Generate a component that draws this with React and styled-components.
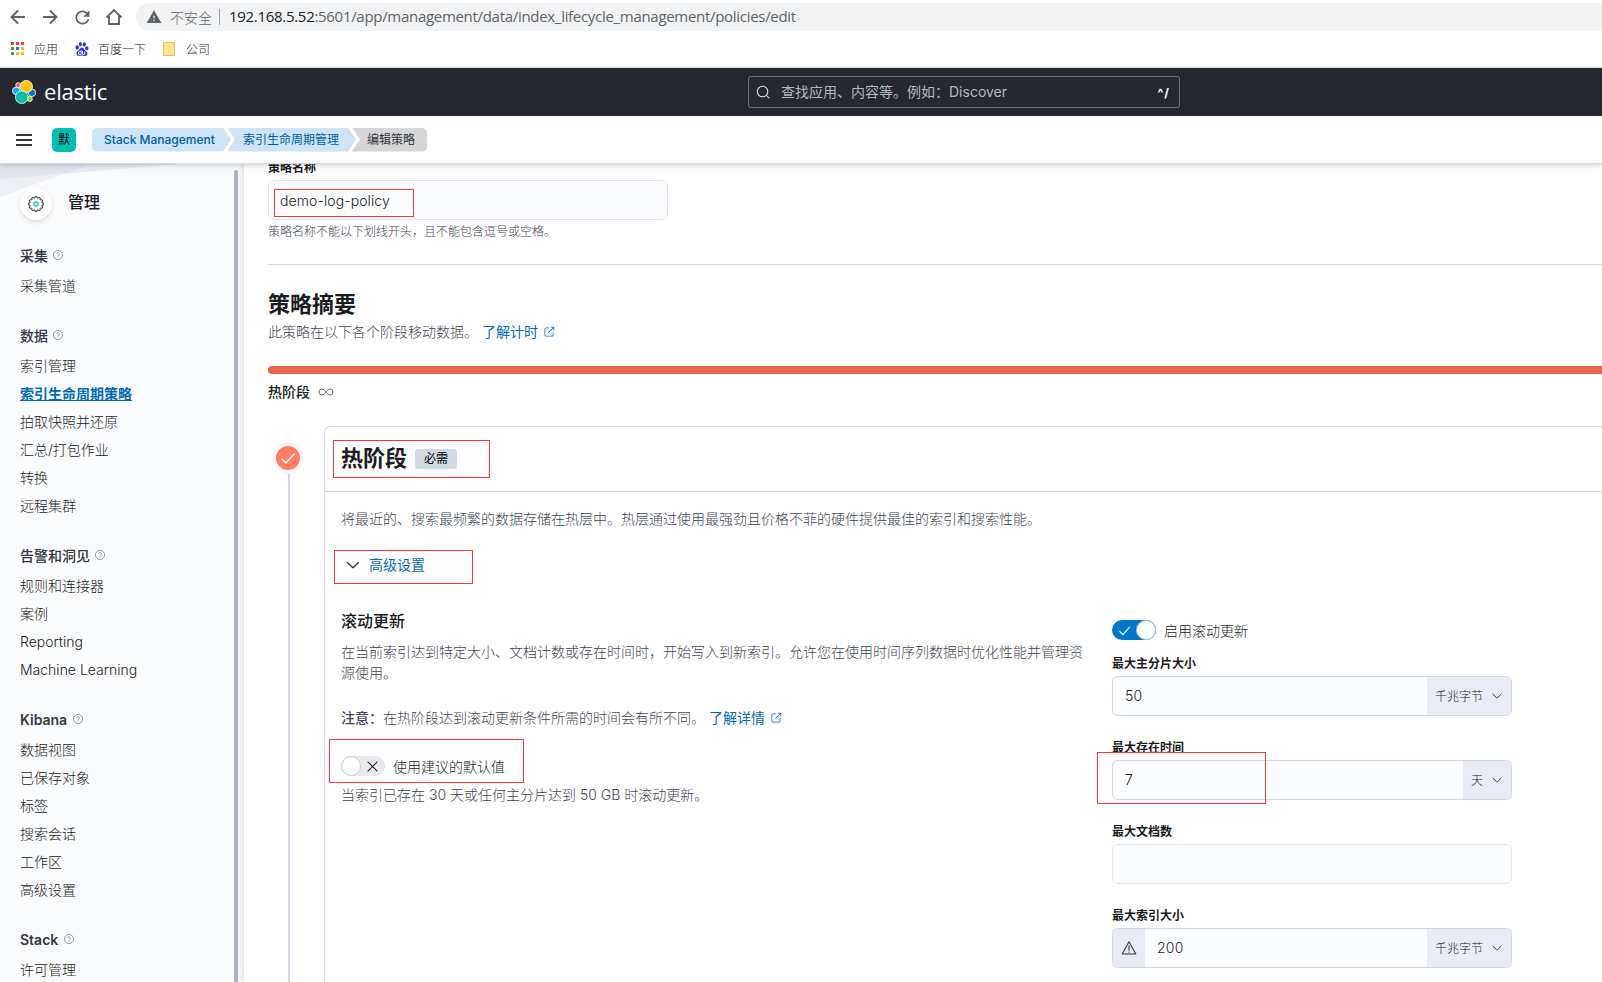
import React from 'react';
import styled, { createGlobalStyle, css } from 'styled-components';
import { MdWarning, MdRefresh } from 'react-icons/md';
import { SiBaidu } from 'react-icons/si';

const GlobalStyle = createGlobalStyle`
  * { box-sizing: border-box; }
  body {
    margin: 0;
    background: #fff;
    color: #343741;
    font-family: Inter, "Noto Sans CJK SC", sans-serif;
    font-size: 14px;
    overflow: hidden;
  }
  svg { display: block; flex: none; }
`

const Page = styled.div`
  position: relative;
  display: flex;
  flex-direction: column;
  height: 100vh;
  overflow: hidden;
  white-space: nowrap;
`

/* browser bars */

const AddressBar = styled.div`
  display: flex;
  align-items: center;
  height: 34px;
  padding-left: 7px;
  color: #5f6368;
`
const NavIcon = styled.div`
  display: flex;
  justify-content: center;
  width: 22px;
  margin-right: 10px;
`
const UrlPill = styled.div`
  display: flex;
  align-items: center;
  flex: 1;
  height: 28px;
  margin-left: 1px;
  padding-left: 10px;
  border-radius: 14px 0 0 14px;
  background: #f1f3f4;
`
const Insecure = styled.span`
  margin-left: 8px;
  padding-right: 7px;
  border-right: 1px solid #9aa0a6;
  line-height: 16px;
  font-family: "Noto Sans CJK SC", sans-serif;
  font-weight: 300;
`
const Url = styled.span`
  margin-left: 9px;
  padding-bottom: 2px;
  font-family: "Open Sans", sans-serif;
  font-size: 15px;
  letter-spacing: -0.3px;
`
const UrlHost = styled.span`
  color: #202124;
`
const Bookmarks = styled.div`
  display: flex;
  align-items: center;
  height: 34px;
  padding-left: 11px;
  padding-bottom: 4px;
  border-bottom: 1px solid #d9dce0;
  font-family: "Noto Sans CJK SC", sans-serif;
  font-size: 12px;
  font-weight: 300;
  color: #202124;
`
const Bookmark = styled.div`
  display: flex;
  align-items: center;
  gap: ${p => p.$gap || 10}px;
  margin-right: 17px;
`
const AppsGrid = styled.div`
  display: grid;
  grid-template-columns: repeat(3, 3px);
  gap: 2px;
`
const AppsDot = styled.i`
  height: 3px;
  background: ${p => p.$color};
`
const FolderMark = styled.div`
  width: 12px;
  height: 14px;
  margin-right: 1px;
  border: 1px solid #e8c64c;
  background: #ffe592;
`

/* kibana headers */

const TopHeader = styled.header`
  display: flex;
  align-items: center;
  flex: none;
  height: 48px;
  padding-left: 12px;
  background: #25282f;
  color: #fff;
`
const Brand = styled.div`
  display: flex;
  align-items: center;
  gap: 8px;
  width: 736px;
`
const Wordmark = styled.span`
  padding-bottom: 2px;
  font-family: "Open Sans", sans-serif;
  font-size: 22px;
  font-weight: 400;
  line-height: 24px;
  letter-spacing: -0.2px;
`
const Search = styled.div`
  display: flex;
  align-items: center;
  width: 432px;
  height: 32px;
  padding: 0 9px 0 7px;
  border: 1px solid #6a6d73;
  border-radius: 3px;
  color: #b3b7c1;
`
const SearchText = styled.span`
  flex: 1;
  margin-left: 11px;
  padding-bottom: 2px;
`
const SearchKey = styled.span`
  padding-top: 1px;
  color: #fff;
  font-size: 12px;
  font-weight: 700;
  letter-spacing: 1px;
`
const SubHeader = styled.div`
  display: flex;
  align-items: center;
  flex: none;
  position: relative;
  z-index: 2;
  height: 48px;
  padding-left: 16px;
  background: #fff;
  border-bottom: 1px solid #d3dae6;
  box-shadow: 0 1px 4px rgba(0, 0, 0, 0.14), 0 4px 9px rgba(0, 0, 0, 0.05);
`
const Burger = styled.div`
  width: 16px;
  height: 12px;
  border-top: 2px solid #343741;
  border-bottom: 2px solid #343741;
  display: flex;
  align-items: center;
  &::before {
    content: '';
    width: 16px;
    height: 2px;
    background: #343741;
  }
`
const Space = styled.div`
  width: 24px;
  height: 24px;
  margin: 0 16px 0 20px;
  border-radius: 5px;
  background: #00bfb3;
  color: #000;
  font-size: 12px;
  line-height: 23px;
  text-align: center;
`
const Crumb = styled.div`
  height: 24px;
  padding: 0 17px 0 16px;
  margin-left: -4px;
  background: #cce4f5;
  color: #0061a6;
  font-size: 12px;
  font-weight: ${p => p.$weight || 400};
  line-height: 24px;
  clip-path: polygon(0 0, calc(100% - 8px) 0, 100% 50%, calc(100% - 8px) 100%, 0 100%, 8px 50%);
  ${p => p.$first && css`
    width: 139px;
    margin-left: 0;
    padding-left: 12px;
    border-radius: 5px 0 0 5px;
    clip-path: polygon(0 0, calc(100% - 8px) 0, 100% 50%, calc(100% - 8px) 100%, 0 100%);
  `}
  ${p => p.$last && css`
    padding: 0 12px 0 15px;
    border-radius: 0 5px 5px 0;
    background: #d6d6d8;
    color: #343741;
    clip-path: polygon(0 0, 100% 0, 100% 100%, 0 100%, 8px 50%);
  `}
`

/* side nav */

const Body = styled.div`
  display: flex;
  flex: 1;
  min-height: 0;
`
const Side = styled.nav`
  position: relative;
  flex: none;
  display: flex;
  width: 244px;
  background: #fafbfd;
`
const SideShapes = styled.svg`
  position: absolute;
  left: 0;
  top: 0;
`
const SideContent = styled.div`
  position: relative;
  width: 234px;
  padding: 24px 0 0 20px;
`
const ScrollThumb = styled.div`
  width: 4px;
  margin-top: 6px;
  border-radius: 2px 2px 0 0;
  background: #afb3be;
`
const SideTitle = styled.div`
  display: flex;
  align-items: center;
  gap: 16px;
  margin-bottom: 25px;
  font-size: 16px;
  font-weight: 500;
  line-height: 28px;
  color: #1a1c21;
`
const SideTitleText = styled.span`
  padding-bottom: 4px;
`
const RoundIcon = styled.div`
  display: flex;
  align-items: center;
  justify-content: center;
  width: 32px;
  height: 32px;
  border-radius: 50%;
  background: #fff;
  box-shadow: 0 2px 5px rgba(0, 0, 0, 0.12);
`
const NavGroup = styled.div`
  margin-bottom: 25px;
`
const NavHeading = styled.div`
  display: flex;
  align-items: center;
  gap: ${p => (p.$latin ? 6 : 5)}px;
  height: 20px;
  margin-bottom: 7px;
  font-weight: ${p => (p.$latin ? 600 : 500)};
  color: #343741;
`
const NavItem = styled.div`
  height: 28px;
  line-height: 28px;
  font-weight: 300;
  color: #1a1c21;
  ${p => p.$active && css`
    color: #006bb8;
    font-weight: 700;
    text-decoration: underline;
  `}
`

/* content */

const Main = styled.main`
  position: relative;
  flex: 1;
  min-width: 0;
  padding-left: 24px;
  background: #fff;
  box-shadow: 0 0 8px rgba(0, 0, 0, 0.16);
`
const Label = styled.div`
  height: 16px;
  margin: ${p => p.$margin || '0'};
  font-size: 12px;
  font-weight: 600;
  line-height: 16px;
  color: #1a1c21;
`
const NameInput = styled.div`
  width: 400px;
  height: 40px;
  padding: 0 11px;
  border: 1px solid #e0e5ee;
  border-radius: 6px;
  background: #fbfcfd;
  font-weight: 300;
  line-height: 39px;
  letter-spacing: 0.1px;
  color: #1a1c21;
`
const HelpText = styled.div`
  margin-top: 4px;
  font-size: 12px;
  font-weight: 300;
  line-height: 16px;
  color: #404550;
`
const Divider = styled.div`
  height: 1px;
  margin-top: 24px;
  background: #d3dae6;
`
const Title = styled.h2`
  margin: 0;
  font-size: 22px;
  font-weight: 700;
  line-height: 32px;
  color: #1a1c21;
`
const SummaryTitle = styled(Title)`
  margin-top: 23px;
`
const Text = styled.div`
  font-weight: 300;
  line-height: 21px;
  color: #404550;
  margin-top: ${p => p.$top || 0}px;
  white-space: ${p => (p.$wrap ? 'normal' : 'nowrap')};
  b { font-weight: 500; }
`
const Link = styled.span`
  display: inline-flex;
  align-items: center;
  gap: 5px;
  margin-left: 4px;
  color: #006bb8;
  font-weight: 400;
`
const PhaseBar = styled.div`
  height: 8px;
  margin-top: 24px;
  border-radius: 4px 0 0 4px;
  background: #e7664c;
`
const PhaseLabel = styled.div`
  display: flex;
  align-items: center;
  gap: 8px;
  margin-top: 7px;
  line-height: 21px;
  font-weight: 500;
  color: #1a1c21;
`
const PhaseRow = styled.div`
  display: flex;
  margin-top: 24px;
  height: 600px;
`
const Timeline = styled.div`
  display: flex;
  flex-direction: column;
  align-items: center;
  width: 40px;
  margin-right: 16px;
  padding: 16px 0 0;
`
const PhaseDot = styled.div`
  display: flex;
  align-items: center;
  justify-content: center;
  width: 32px;
  height: 32px;
  border: 4px solid #f5f7fa;
  border-radius: 50%;
  background: #ff7e62;
`
const TimelineLine = styled.div`
  flex: 1;
  width: 2px;
  margin-left: 2px;
  background: #d3dae6;
`
const PhasePanel = styled.section`
  flex: 1;
  border: 1px solid #d3dae6;
  border-right: 0;
  border-radius: 6px 0 0 0;
`
const PanelHeader = styled.div`
  display: flex;
  align-items: center;
  gap: 8px;
  height: 65px;
  padding: 0 0 2px 16px;
  border-bottom: 1px solid #d3dae6;
`
const Badge = styled.span`
  height: 20px;
  margin-top: 2px;
  padding: 0 9px;
  border-radius: 3px;
  background: #d3dae6;
  color: #000;
  font-size: 12px;
  font-weight: 400;
  line-height: 19px;
`
const PanelBody = styled.div`
  padding: 16px 0 0 16px;
`
const Toggle = styled.div`
  display: flex;
  align-items: center;
  gap: 8px;
  margin: 25px 0 0 4px;
  color: #006bb8;
  line-height: 21px;
`
const Columns = styled.div`
  display: flex;
  margin-top: 34px;
`
const Left = styled.div`
  width: 746px;
  margin-right: 25px;
`
const Right = styled.div`
  width: 400px;
  padding-top: 11px;
`
const SubTitle = styled.h3`
  margin: 0;
  font-size: 16px;
  font-weight: 500;
  line-height: 24px;
  color: #1a1c21;
`
const SwitchRow = styled.div`
  display: flex;
  align-items: center;
  gap: 8px;
  height: 20px;
  margin-top: ${p => p.$top || 0}px;
  font-weight: 300;
  color: #1a1c21;
`
const SwitchTrack = styled.div`
  display: flex;
  align-items: center;
  flex-direction: ${p => (p.$on ? 'row' : 'row-reverse')};
  justify-content: space-between;
  width: 44px;
  height: 20px;
  padding-${p => (p.$on ? 'left' : 'right')}: 6px;
  border-radius: 10px;
  background: ${p => (p.$on ? '#0077cc' : '#e9eaee')};
`
const SwitchThumb = styled.div`
  width: 20px;
  height: 20px;
  border: 1px solid ${p => (p.$on ? '#a5bfd8' : '#c8cacf')};
  border-radius: 50%;
  background: #fff;
`
const Field = styled.div`
  display: flex;
  height: 40px;
  margin-bottom: 24px;
  border: 1px solid ${p => (p.$plain ? '#e2e6f0' : '#cfd7e8')};
  border-radius: 6px;
  background: #fbfcfd;
  overflow: hidden;
`
const FieldValue = styled.div`
  flex: 1;
  padding-left: 12px;
  font-weight: 300;
  line-height: 38px;
  letter-spacing: 0.2px;
  color: #1a1c21;
`
const Prepend = styled.div`
  display: flex;
  align-items: center;
  justify-content: center;
  width: 32px;
  background: #e9ecf4;
`
const Append = styled.div`
  display: flex;
  align-items: center;
  gap: 8px;
  padding: 0 8px 1px;
  background: #e9ecf4;
  font-size: 12px;
  font-weight: 300;
  color: #1a1c21;
`

const Mark = styled.div`
  position: absolute;
  z-index: 5;
  left: ${p => p.$x}px;
  top: ${p => p.$y}px;
  width: ${p => p.$w}px;
  height: ${p => p.$h}px;
  border: 1px solid #f5393b;
`

const Stroke = ({ d, size = 16, box = 16, width = 1, color = 'currentColor', ...rest }) => (
  <svg width={size} height={size} viewBox={`0 0 ${box} ${box}`} fill="none" stroke={color} strokeWidth={width} {...rest}>
    <path d={d} />
  </svg>
)

const Chevron = ({ size = 16 }) => (
  <Stroke size={size} d="M2.5 5.5l4.8 4.7a1 1 0 0 0 1.4 0l4.8-4.7" width={1.3} color="#343741" strokeLinecap="round" />
)

const PopoutIcon = () => (
  <svg width="12" height="12" viewBox="0 0 16 16" fill="currentColor">
    <path d="M13 8.5a.5.5 0 1 1 1 0V12a2 2 0 0 1-2 2H4a2 2 0 0 1-2-2V4a2 2 0 0 1 2-2h3.500a.5.5 0 0 1 0 1H4a1 1 0 0 0-1 1v8a1 1 0 0 0 1 1h8a1 1 0 0 0 1-1V8.500Zm-5.120.339a.5.5 0 1 1-.706-.707L13.305 2H10.500a.5.5 0 1 1 0-1H14a1 1 0 0 1 1 1v3.500a.5.5 0 1 1-1 0V2.720L7.880 8.838Z" />
  </svg>
)

const HelpIcon = () => (
  <svg width="10" height="10" viewBox="0 0 16 16" fill="none" stroke="#747a86" strokeWidth="1.200">
    <circle cx="8" cy="8" r="7.300" />
    <path d="M5.800 6.400a2.200 2.200 0 1 1 3.300 1.900c-.8.400-1.100.8-1.100 1.700M8 11v1.400" />
  </svg>
)

const ElasticLogo = () => (
  <svg width="24" height="24" viewBox="0 0 24 24" stroke="#fff" strokeWidth="0.800">
    <circle cx="6.300" cy="5.200" r="2.600" fill="#f04e98" />
    <circle cx="4.200" cy="10.900" r="3.800" fill="#1ba9f5" />
    <circle cx="19.900" cy="12.800" r="3.800" fill="#0077cc" />
    <circle cx="17.700" cy="18.900" r="2.600" fill="#93c90e" />
    <circle cx="14.300" cy="6.600" r="6.200" fill="#fec514" />
    <circle cx="9.700" cy="17.200" r="6.300" fill="#00bfb3" />
  </svg>
)

const gearPath = () => {
  const teeth = 12
  const points = []
  for (let i = 0; i < teeth; i++) {
    const a = (i / teeth) * Math.PI * 2
    ;[[-0.15, 6.2], [-0.12, 7.5], [0.12, 7.5], [0.15, 6.2]].forEach(([da, r]) => {
      points.push(`${(8 + Math.cos(a + da) * r).toFixed(2)} ${(8 + Math.sin(a + da) * r).toFixed(2)}`)
    })
  }
  return `M${points.join('L')}Z`
}

const GearIcon = () => (
  <svg width="16" height="16" viewBox="0 0 16 16" fill="none" stroke="#343741">
    <path d={gearPath()} />
    <circle cx="8" cy="8" r="2.200" stroke="#00bfb3" strokeWidth="1.200" />
  </svg>
)

const dots = ['#ea4335', '#ea4335', '#ea4335', '#34a853', '#1a73e8', '#fbbc04', '#34a853', '#fbbc04', '#fbbc04']

const groups = [
  { title: '采集', items: ['采集管道'] },
  { title: '数据', items: ['索引管理', '索引生命周期策略', '拍取快照并还原', '汇总/打包作业', '转换', '远程集群'] },
  { title: '告警和洞见', items: ['规则和连接器', '案例', 'Reporting', 'Machine Learning'] },
  { title: 'Kibana', latin: true, items: ['数据视图', '已保存对象', '标签', '搜索会话', '工作区', '高级设置'] },
  { title: 'Stack', latin: true, items: ['许可管理'] },
]

const fields = [
  { label: '最大主分片大小', value: '50', unit: '千兆字节' },
  { label: '最大存在时间', value: '7', unit: '天' },
  { label: '最大文档数', value: '' },
  { label: '最大索引大小', value: '200', unit: '千兆字节', warn: true },
]

const marks = [
  [274, 189, 140, 28],
  [333, 440, 157, 38],
  [334, 550, 139, 34],
  [329, 739, 195, 44],
  [1097, 752, 169, 52],
]

function BrowserBars() {
  return (
    <>
      <AddressBar>
        <NavIcon><Stroke d="M15 8H2M8 1.500L1.500 8L8 14.500" width={1.9} /></NavIcon>
        <NavIcon><Stroke d="M1 8H14M8 1.500L14.500 8L8 14.500" width={1.9} /></NavIcon>
        <NavIcon><MdRefresh size={21} /></NavIcon>
        <NavIcon><Stroke size={18} box={18} d="M1.500 9.500L9 2l7.500 7.500M4 8v8h10V8" width={1.9} /></NavIcon>
        <UrlPill>
          <MdWarning size={16} />
          <Insecure>不安全</Insecure>
          <Url><UrlHost>192.168.5.52</UrlHost>:5601/app/management/data/index_lifecycle_management/policies/edit</Url>
        </UrlPill>
      </AddressBar>
      <Bookmarks>
        <Bookmark>
          <AppsGrid>{dots.map((c, i) => <AppsDot key={i} $color={c} />)}</AppsGrid>
          应用
        </Bookmark>
        <Bookmark $gap={9}><SiBaidu size={14} color="#2932e1" />百度一下</Bookmark>
        <Bookmark><FolderMark />公司</Bookmark>
      </Bookmarks>
    </>
  )
}

function SideNav() {
  return (
    <Side>
      <SideShapes width="234" height="40" viewBox="0 0 234 40">
        <path d="M0 0H178L0 15Z" fill="#e9edf4" />
        <path d="M0 0H90L0 33Z" fill="#d3dae6" fillOpacity="0.350" />
      </SideShapes>
      <SideContent>
        <SideTitle>
          <RoundIcon><GearIcon /></RoundIcon>
          <SideTitleText>管理</SideTitleText>
        </SideTitle>
        {groups.map(g => (
          <NavGroup key={g.title}>
            <NavHeading $latin={g.latin}>{g.title}<HelpIcon /></NavHeading>
            {g.items.map(item => (
              <NavItem key={item} $active={item === '索引生命周期策略'}>{item}</NavItem>
            ))}
          </NavGroup>
        ))}
      </SideContent>
      <ScrollThumb />
    </Side>
  )
}

function HotPhase() {
  return (
    <PhasePanel>
      <PanelHeader>
        <Title>热阶段</Title>
        <Badge>必需</Badge>
      </PanelHeader>
      <PanelBody>
        <Text>将最近的、搜索最频繁的数据存储在热层中。热层通过使用最强劲且价格不菲的硬件提供最佳的索引和搜索性能。</Text>
        <Toggle><Chevron />高级设置</Toggle>
        <Columns>
          <Left>
            <SubTitle>滚动更新</SubTitle>
            <Text $wrap $top={8}>在当前索引达到特定大小、文档计数或存在时间时，开始写入到新索引。允许您在使用时间序列数据时优化性能并管理资源使用。</Text>
            <Text $top={24}>
              <b>注意：</b>在热阶段达到滚动更新条件所需的时间会有所不同。
              <Link>了解详情<PopoutIcon /></Link>
            </Text>
            <SwitchRow $top={28}>
              <SwitchTrack>
                <Stroke size={13} d="M2 2l12 12M14 2L2 14" width={1.3} />
                <SwitchThumb />
              </SwitchTrack>
              使用建议的默认值
            </SwitchRow>
            <Text $top={8}>当索引已存在 30 天或任何主分片达到 50 GB 时滚动更新。</Text>
          </Left>
          <Right>
            <SwitchRow>
              <SwitchTrack $on>
                <Stroke size={13} d="M1.500 8.500l4.500 4.500L14.500 3.500" width={1.4} color="#fff" />
                <SwitchThumb $on />
              </SwitchTrack>
              启用滚动更新
            </SwitchRow>
            {fields.map((f, i) => (
              <React.Fragment key={f.label}>
                <Label $margin={i === 0 ? '16px 0 4px' : '0 0 4px'}>{f.label}</Label>
                <Field $plain={!f.unit}>
                  {f.warn && (
                    <Prepend>
                      <Stroke d="M8 1.800L1.200 14h13.600ZM8 5.500v5M8 11.500v1.300" width={1.1} color="#343741" strokeLinejoin="round" />
                    </Prepend>
                  )}
                  <FieldValue>{f.value}</FieldValue>
                  {f.unit && <Append>{f.unit}<Chevron size={12} /></Append>}
                </Field>
              </React.Fragment>
            ))}
          </Right>
        </Columns>
      </PanelBody>
    </PhasePanel>
  )
}

export default function App() {
  return (
    <Page>
      <GlobalStyle />
      <BrowserBars />
      <TopHeader>
        <Brand><ElasticLogo /><Wordmark>elastic</Wordmark></Brand>
        <Search>
          <svg width="14" height="14" viewBox="0 0 16 16" fill="none" stroke="#dfe5ef" strokeWidth="1.200">
            <circle cx="7.500" cy="7.500" r="6" />
            <path d="M12 12l3 3" />
          </svg>
          <SearchText>查找应用、内容等。例如：Discover</SearchText>
          <SearchKey>^/</SearchKey>
        </Search>
      </TopHeader>
      <SubHeader>
        <Burger />
        <Space>默</Space>
        <Crumb $first $weight={500}>Stack Management</Crumb>
        <Crumb>索引生命周期管理</Crumb>
        <Crumb $last>编辑策略</Crumb>
      </SubHeader>
      <Body>
        <SideNav />
        <Main>
          <Label $margin="-4px 0 4px">策略名称</Label>
          <NameInput>demo-log-policy</NameInput>
          <HelpText>策略名称不能以下划线开头，且不能包含逗号或空格。</HelpText>
          <Divider />
          <SummaryTitle>策略摘要</SummaryTitle>
          <Text $top={1}>此策略在以下各个阶段移动数据。<Link>了解计时<PopoutIcon /></Link></Text>
          <PhaseBar />
          <PhaseLabel>
            热阶段
            <Stroke d="M8 8C6.500 6 5.500 5 4 5a3 3 0 0 0 0 6c1.500 0 2.500-1 4-3s2.500-3 4-3a3 3 0 0 1 0 6c-1.500 0-2.500-1-4-3Z" color="#69707d" />
          </PhaseLabel>
          <PhaseRow>
            <Timeline>
              <PhaseDot><Stroke d="M1.500 8.500l4.500 4.500L14.500 3.500" width={1.4} color="#fff" /></PhaseDot>
              <TimelineLine />
            </Timeline>
            <HotPhase />
          </PhaseRow>
        </Main>
      </Body>
      {marks.map(([x, y, w, h]) => <Mark key={y} $x={x} $y={y} $w={w} $h={h} />)}
    </Page>
  )
}
